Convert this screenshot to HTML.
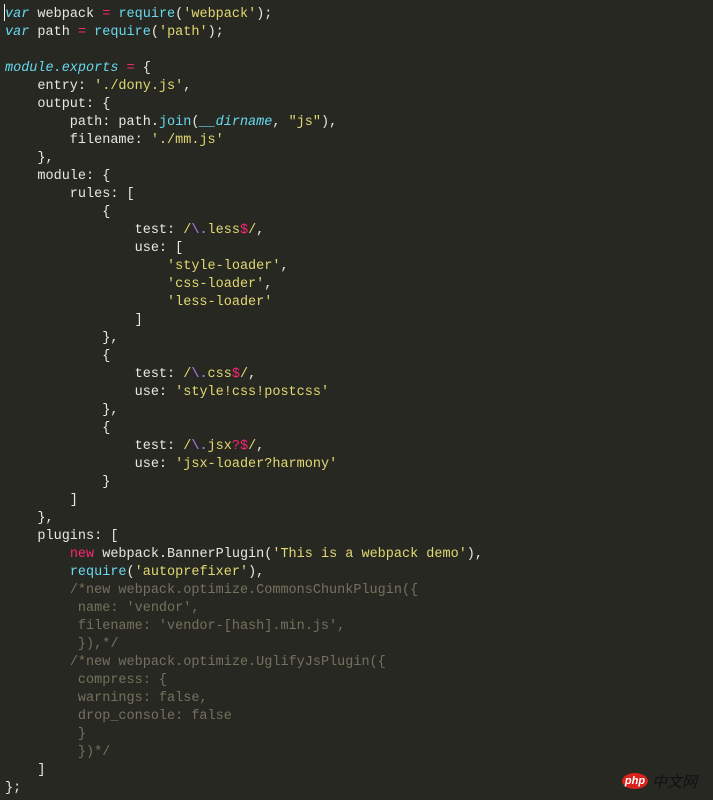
<!DOCTYPE html>
<html><head><meta charset="utf-8"><style>
html,body{margin:0;padding:0;background:#272822;width:713px;height:800px;overflow:hidden}
pre{margin:0;padding:6px 0 0 5px;font-family:"Liberation Mono",monospace;font-size:13.5px;line-height:18px;color:#e8e8e2;position:relative}
.k{color:#66d9ef;font-style:italic}
.f{color:#66d9ef}
.o{color:#f92672}
.s{color:#e2d872}
.r{color:#ae81ff}
.c{color:#75715e}
.a{color:#66d9ef;font-style:italic}
.cur{position:absolute;left:4px;top:4px;width:1px;height:17px;background:#f8f8f0}
.logo{position:absolute;left:622px;top:773px;width:26px;height:16px;border-radius:50%;background:#d9221c;color:#fff;font:italic bold 11px "Liberation Sans",sans-serif;text-align:center;line-height:16px}
.cn{position:absolute;left:652px;top:771px;color:#111;font:italic 15px "Noto Sans CJK SC",sans-serif}
</style></head><body>
<pre><span class="cur"></span><span class="k">var</span> webpack <span class="o">=</span> <span class="f">require</span>(<span class="s">'webpack'</span>);
<span class="k">var</span> path <span class="o">=</span> <span class="f">require</span>(<span class="s">'path'</span>);

<span class="k">module.exports</span> <span class="o">=</span> {
    entry: <span class="s">'./dony.js'</span>,
    output: {
        path: path.<span class="f">join</span>(<span class="a">__dirname</span>, <span class="s">"js"</span>),
        filename: <span class="s">'./mm.js'</span>
    },
    module: {
        rules: [
            {
                test: <span class="s">/</span><span class="r">\.</span><span class="s">less</span><span class="o">$</span><span class="s">/</span>,
                use: [
                    <span class="s">'style-loader'</span>,
                    <span class="s">'css-loader'</span>,
                    <span class="s">'less-loader'</span>
                ]
            },
            {
                test: <span class="s">/</span><span class="r">\.</span><span class="s">css</span><span class="o">$</span><span class="s">/</span>,
                use: <span class="s">'style!css!postcss'</span>
            },
            {
                test: <span class="s">/</span><span class="r">\.</span><span class="s">jsx</span><span class="o">?$</span><span class="s">/</span>,
                use: <span class="s">'jsx-loader?harmony'</span>
            }
        ]
    },
    plugins: [
        <span class="o">new</span> webpack.BannerPlugin(<span class="s">'This is a webpack demo'</span>),
        <span class="f">require</span>(<span class="s">'autoprefixer'</span>),
        <span class="c">/*new webpack.optimize.CommonsChunkPlugin({</span>
<span class="c">         name: 'vendor',</span>
<span class="c">         filename: 'vendor-[hash].min.js',</span>
<span class="c">         }),*/</span>
        <span class="c">/*new webpack.optimize.UglifyJsPlugin({</span>
<span class="c">         compress: {</span>
<span class="c">         warnings: false,</span>
<span class="c">         drop_console: false</span>
<span class="c">         }</span>
<span class="c">         })*/</span>
    ]
};</pre>
<div class="logo">php</div><div class="cn">中文网</div>
</body></html>
